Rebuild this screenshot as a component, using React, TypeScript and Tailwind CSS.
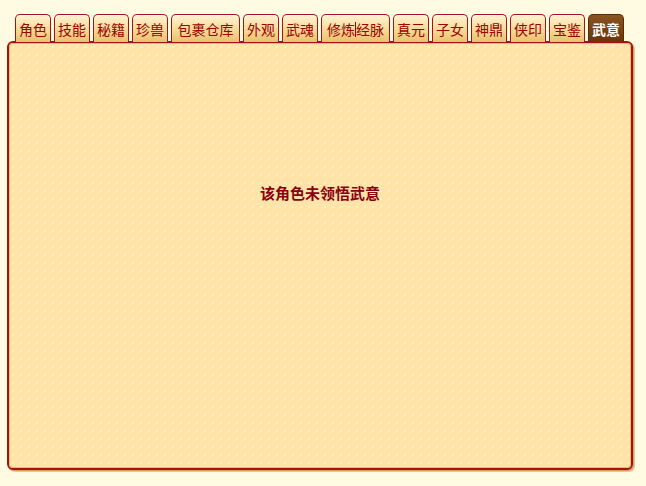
const TABS = [
  "角色",
  "技能",
  "秘籍",
  "珍兽",
  "包裹仓库",
  "外观",
  "武魂",
  "修炼经脉",
  "真元",
  "子女",
  "神鼎",
  "侠印",
  "宝鉴",
  "武意",
];

const ACTIVE = "武意";

export default function App() {
  return (
    <div
      className="w-[646px] h-[486px] bg-[#fffbe2] pt-[14px] px-[7px] overflow-hidden"
      style={{ fontFamily: '"Noto Sans CJK SC", "Noto Sans", sans-serif' }}
    >
      {/* 标签栏 */}
      <div className="flex gap-[3px] pl-[8px] relative z-10">
        {TABS.map((t) => {
          const active = t === ACTIVE;
          const wide = t.length > 2;
          return (
            <div
              key={t}
              className={
                (wide ? "w-[69px] " : "w-[36px] ") +
                (active
                  ? "h-[28px] flex justify-center pt-[4px] text-[14px] leading-[20px] font-bold text-white rounded-t-[5px] border border-b-0 border-[#5a2a08] bg-gradient-to-b from-[#8a5420] to-[#6a3408]"
                  : "h-[28px] flex justify-center pt-[4px] text-[14px] leading-[20px] text-[#a00000] rounded-t-[5px] border border-b-0 border-[#a31515] bg-gradient-to-b from-[#fff3d2] via-[#f8dc9c] to-[#e9c06c] shadow-[inset_0_1px_0_#fffaf0]")
              }
            >
              {t === "修炼经脉" ? (
                <>
                  <span>修炼</span>
                  <span className="w-px h-[15px] mt-[3px] bg-[#a00000]" />
                  <span>经脉</span>
                </>
              ) : (
                t
              )}
            </div>
          );
        })}
      </div>

      {/* 内容面板 */}
      <div className="-mt-px h-[429px] w-[626px] rounded-[6px] border-2 border-[#a31515] bg-[#ffe4aa] shadow-[1px_1px_0_#d2a064,2px_2px_0_#e6c896] relative">
        <div className="h-full w-full rounded-[4px] shadow-[inset_0_0_0_1px_#f2b46a] bg-[radial-gradient(circle,#ffedc4_1px,transparent_1.2px)] bg-[length:8px_8px] flex justify-center pt-[140px]">
          <span className="text-[15px] font-bold text-[#8b0010] leading-[20px]">
            该角色未领悟武意
          </span>
        </div>
      </div>
    </div>
  );
}
